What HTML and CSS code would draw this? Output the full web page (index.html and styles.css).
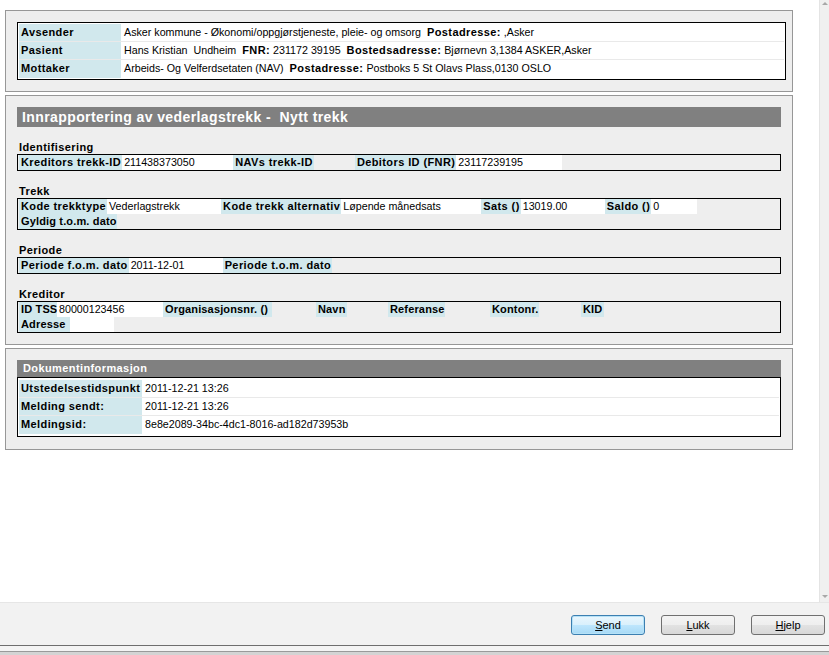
FILE: index.html
```html
<!DOCTYPE html>
<html lang="no">
<head>
<meta charset="utf-8">
<title>Innrapportering av vederlagstrekk</title>
<link rel="stylesheet" href="styles.css">
</head>
<body>
<div class="window">
  <div class="main">
    <div class="content">
      <section class="panel panel-head">
        <div class="info-table wide">
          <div class="info-row">
            <div class="info-label">Avsender</div>
            <div class="info-value">Asker kommune - Økonomi/oppgjørstjeneste, pleie- og omsorg&nbsp; <b>Postadresse:</b> ,Asker</div>
          </div>
          <div class="info-row">
            <div class="info-label">Pasient</div>
            <div class="info-value">Hans Kristian&nbsp; Undheim&nbsp; <b>FNR:</b> 231172 39195&nbsp; <b>Bostedsadresse:</b> Bjørnevn 3,1384 ASKER,Asker</div>
          </div>
          <div class="info-row">
            <div class="info-label">Mottaker</div>
            <div class="info-value">Arbeids- Og Velferdsetaten (NAV)&nbsp; <b>Postadresse:</b> Postboks 5 St Olavs Plass,0130 OSLO</div>
          </div>
        </div>
      </section>

      <section class="panel panel-main">
        <h1 class="title-bar">Innrapportering av vederlagstrekk -&nbsp; Nytt trekk</h1>

        <div class="group">
          <h2 class="group-title">Identifisering</h2>
          <div class="box">
            <div class="line">
              <span class="lbl">Kreditors trekk-ID</span><span class="val w111">211438373050</span>
              <span class="lbl">NAVs trekk-ID</span><span class="val empty w41"></span>
              <span class="lbl">Debitors ID (FNR)</span><span class="val w106">23117239195</span>
            </div>
          </div>
        </div>

        <div class="group">
          <h2 class="group-title">Trekk</h2>
          <div class="box">
            <div class="line">
              <span class="lbl">Kode trekktype</span><span class="val w114">Vederlagstrekk</span>
              <span class="lbl">Kode trekk alternativ</span><span class="val w140">Løpende månedsats</span>
              <span class="lbl">Sats ()</span><span class="val w84">13019.00</span>
              <span class="lbl">Saldo ()</span><span class="val w46">0</span>
            </div>
            <div class="line">
              <span class="lbl tight lw98">Gyldig t.o.m. dato</span><span class="val empty w44"></span>
            </div>
          </div>
        </div>

        <div class="group">
          <h2 class="group-title">Periode</h2>
          <div class="box">
            <div class="line">
              <span class="lbl">Periode f.o.m. dato</span><span class="val w94">2011-12-01</span>
              <span class="lbl">Periode t.o.m. dato</span><span class="val empty w44"></span>
            </div>
          </div>
        </div>

        <div class="group">
          <h2 class="group-title">Kreditor</h2>
          <div class="box">
            <div class="line">
              <span class="lbl tight lw38">ID TSS</span><span class="val w106">80000123456</span>
              <span class="lbl tight lw109">Organisasjonsnr. ()</span><span class="val empty w44"></span>
              <span class="lbl tight lw31">Navn</span><span class="val empty w41"></span>
              <span class="lbl tight lw57">Referanse</span><span class="val empty w45"></span>
              <span class="lbl tight lw49">Kontonr.</span><span class="val empty w42"></span>
              <span class="lbl tight lw23">KID</span><span class="val empty w44"></span>
            </div>
            <div class="line">
              <span class="lbl tight lw51">Adresse</span><span class="val w44"></span>
            </div>
          </div>
        </div>
      </section>

      <section class="panel panel-doc">
        <h2 class="doc-bar">Dokumentinformasjon</h2>
        <div class="info-table doc">
          <div class="info-row">
            <div class="info-label">Utstedelsestidspunkt</div>
            <div class="info-value">2011-12-21 13:26</div>
          </div>
          <div class="info-row">
            <div class="info-label">Melding sendt:</div>
            <div class="info-value">2011-12-21 13:26</div>
          </div>
          <div class="info-row">
            <div class="info-label">Meldingsid:</div>
            <div class="info-value">8e8e2089-34bc-4dc1-8016-ad182d73953b</div>
          </div>
        </div>
      </section>
    </div>
    <div class="scrollbar">
      <span class="arrow up"></span>
      <span class="arrow down"></span>
    </div>
  </div>

  <div class="footer">
    <button class="btn default" type="button"><u>S</u>end</button>
    <button class="btn" type="button"><u>L</u>ukk</button>
    <button class="btn" type="button"><u>H</u>jelp</button>
  </div>
  <div class="frame-bottom"></div>
</div>
</body>
</html>
```

FILE: styles.css
```css
* {
  box-sizing: border-box;
}

html, body {
  margin: 0;
  padding: 0;
  background: #ffffff;
}

body {
  font-family: "Liberation Sans", Arial, sans-serif;
  font-size: 10.7px;
  color: #000;
}

b {
  font-weight: bold;
  font-size: 11px;
  letter-spacing: 0.4px;
}

.window {
  width: 829px;
  height: 655px;
  display: flex;
  flex-direction: column;
  overflow: hidden;
}

.main {
  height: 602px;
  display: flex;
}

.content {
  flex: 1;
  padding: 10px 0 0 5px;
}

.scrollbar {
  width: 10px;
  background: #f0f0f0;
  border-left: 1px solid #e4e4e4;
  display: flex;
  flex-direction: column;
  justify-content: space-between;
  align-items: center;
  padding: 2px 0 4px;
}

.arrow {
  width: 0;
  height: 0;
  border-left: 3px solid transparent;
  border-right: 3px solid transparent;
}

.arrow.up {
  border-bottom: 3px solid #a8a8a8;
}

.arrow.down {
  border-top: 3px solid #a8a8a8;
}

/* panels */
.panel {
  width: 788px;
  background: #eeeeee;
  border: 1px solid #979797;
  padding: 11px;
  margin-bottom: 3px;
}

.panel-head {
  padding-right: 6px;
}

.panel-main {
  padding-bottom: 11px;
}

.panel-doc {
  padding-bottom: 12px;
}

/* info tables */
.info-table {
  border: 1px solid #000;
  background: #fff;
  padding: 1px;
}

.info-table.doc {
  padding: 2px 1px 2px;
}

.info-row {
  display: flex;
  height: 18px;
  border-bottom: 1px solid #e9e9e9;
}

.info-row:last-child {
  border-bottom: none;
}

.info-label {
  width: 102px;
  flex: none;
  background: #d1e8ed;
  font-weight: bold;
  font-size: 11px;
  letter-spacing: 0.4px;
  padding-left: 2px;
  line-height: 17px;
  white-space: nowrap;
}

.doc .info-label {
  width: 123px;
}

.info-value {
  flex: 1;
  padding-left: 3px;
  line-height: 17px;
  white-space: nowrap;
}

/* title bars */
.title-bar {
  margin: 0;
  height: 20px;
  line-height: 20px;
  background: #808080;
  color: #fff;
  font-size: 14px;
  letter-spacing: 0.4px;
  font-weight: bold;
  padding-left: 5px;
}

.doc-bar {
  margin: 0;
  height: 17px;
  line-height: 17px;
  background: #808080;
  color: #fff;
  font-size: 11px;
  letter-spacing: 0.4px;
  font-weight: bold;
  padding-left: 6px;
}

/* groups */
.group {
  margin-top: 13px;
}

.group-title {
  margin: 0;
  height: 14px;
  line-height: 14px;
  font-size: 11px;
  letter-spacing: 0.4px;
  font-weight: bold;
  padding-left: 2px;
}

.box {
  border: 1px solid #000;
  padding: 0 1px;
}

.line {
  display: flex;
  height: 15px;
  line-height: 15px;
  white-space: nowrap;
}

.lbl {
  background: #d1e8ed;
  font-weight: bold;
  font-size: 11px;
  letter-spacing: 0.4px;
  padding: 0 1px 0 2px;
  flex: none;
}

.lbl.tight {
  letter-spacing: 0.15px;
}

.lw23 { width: 23px; }
.lw31 { width: 31px; }
.lw38 { width: 38px; }
.lw49 { width: 49px; }
.lw51 { width: 51px; }
.lw57 { width: 57px; }
.lw98 { width: 98px; }
.lw109 { width: 109px; }

.val {
  background: #fff;
  padding-left: 2px;
  flex: none;
}

.val.empty {
  background: transparent;
}

.w41 { width: 41px; }
.w42 { width: 42px; }
.w44 { width: 44px; }
.w45 { width: 45px; }
.w46 { width: 46px; }
.w84 { width: 84px; }
.w94 { width: 94px; }
.w106 { width: 106px; }
.w111 { width: 111px; }
.w114 { width: 114px; }
.w140 { width: 140px; }

/* footer */
.footer {
  height: 43px;
  background: #f2f2f2;
  border-top: 1px solid #e6e6e6;
  display: flex;
  justify-content: flex-end;
  align-items: flex-start;
  gap: 16px;
  padding: 12px 4px 0 0;
}

.btn {
  width: 74px;
  height: 20px;
  border: 1px solid #707070;
  border-radius: 3px;
  background: linear-gradient(#f4f4f4 0%, #eeeeee 50%, #e2e2e2 51%, #d8d8d8 100%);
  font-family: "Liberation Sans", Arial, sans-serif;
  font-size: 11px;
  color: #000;
  padding: 0;
  line-height: 18px;
}

.btn.default {
  border-color: #3c7fb1;
  background: linear-gradient(#eaf6fd 0%, #d9f0fc 50%, #bee6fd 51%, #a7d9f5 100%);
  box-shadow: inset 0 0 0 1px #b6e2f7;
}

.frame-bottom {
  flex: 1;
  border-top: 1px solid #6e6e6e;
  background: linear-gradient(#f4f4f4 0, #f4f4f4 5px, #9a9a9a 5px, #9a9a9a 6px, #d4d4d4 6px);
}
```
